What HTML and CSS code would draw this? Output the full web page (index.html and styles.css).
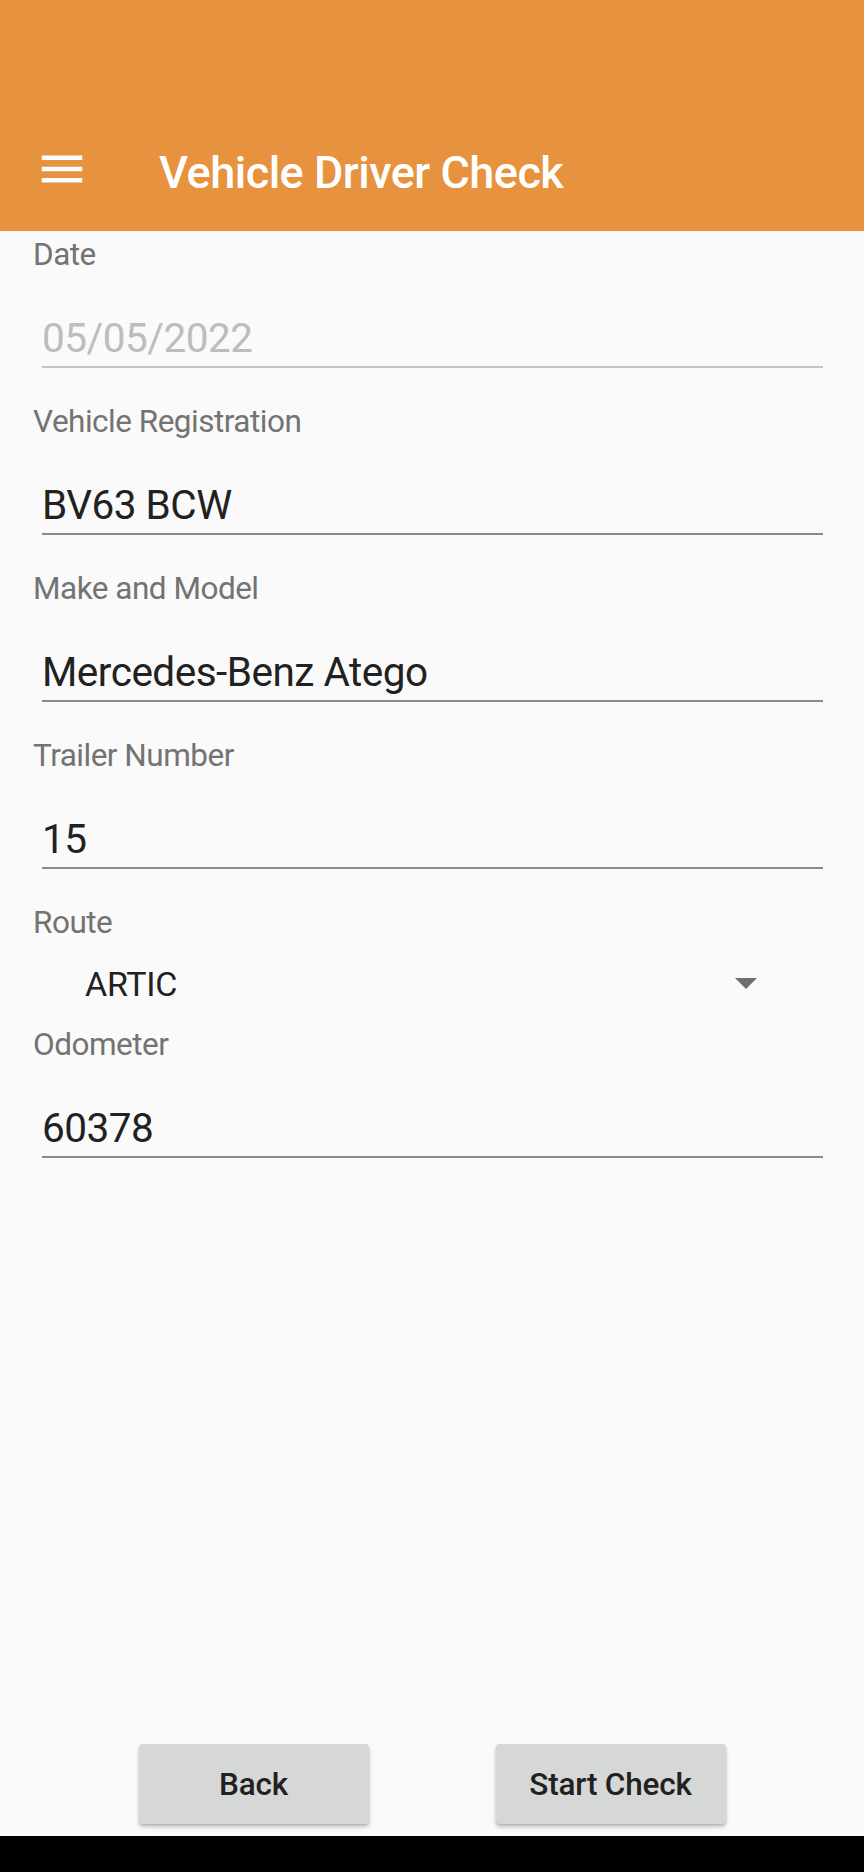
FILE: index.html
```html
<!DOCTYPE html>
<html lang="en">

<head>
    <meta charset="UTF-8">
    <title>Vehicle Driver Check</title>
    <link rel="stylesheet" href="styles.css">
</head>

<body>
    <div class="appbar">
        <div class="toolbar">
            <svg class="menuIcon" viewBox="0 0 24 24">
                <path d="M3 18h18v-2H3v2zm0-5h18v-2H3v2zm0-7v2h18V6H3z" fill="#fff"></path>
            </svg>
            <div class="title">Vehicle Driver Check</div>
        </div>
    </div>

    <div class="content">
        <div class="field first">
            <div class="label">Date</div>
            <div class="value disabled">05/05/2022</div>
        </div>
        <div class="field">
            <div class="label">Vehicle Registration</div>
            <div class="value">BV63 BCW</div>
        </div>
        <div class="field">
            <div class="label">Make and Model</div>
            <div class="value">Mercedes-Benz Atego</div>
        </div>
        <div class="field">
            <div class="label">Trailer Number</div>
            <div class="value">15</div>
        </div>
        <div class="field">
            <div class="label">Route</div>
            <div class="spinner">
                <span class="spinnerText">ARTIC</span>
                <span class="arrow"></span>
            </div>
        </div>
        <div class="field after-spinner">
            <div class="label">Odometer</div>
            <div class="value">60378</div>
        </div>
    </div>

    <div class="btnRow">
        <div class="btn">Back</div>
        <div class="btn">Start Check</div>
    </div>

    <div class="navbar"></div>
</body>

</html>
```

FILE: styles.css
```css
* {
    margin: 0px;
    padding: 0px;
    box-sizing: border-box;
}

html,
body {
    width: 100%;
    height: 100%;
}

body {
    display: flex;
    flex-direction: column;
    background-color: #fafafa;
    font-family: Roboto, "Liberation Sans", sans-serif;
    overflow: hidden;
}

.appbar {
    height: 231px;
    background-color: #e7923e;
    display: flex;
    flex-direction: column;
    justify-content: flex-end;
}

.toolbar {
    height: 126px;
    display: flex;
    align-items: center;
}

.menuIcon {
    width: 54px;
    height: 54px;
    margin-left: 35px;
    margin-top: 2px;
}

.title {
    margin-left: 70px;
    padding-top: 9px;
    font-size: 45px;
    line-height: 53px;
    font-weight: 500;
    letter-spacing: -0.5px;
    color: #fff;
}

.content {
    flex: 1;
}

.field {
    margin-top: 35px;
}

.field.first {
    margin-top: 5px;
}

.field.after-spinner {
    margin-top: 0px;
}

.label {
    padding-left: 33px;
    font-size: 31.5px;
    line-height: 37px;
    letter-spacing: -0.5px;
    color: #737373;
}

.value {
    margin: 41px 41px 0 42px;
    height: 54px;
    padding-bottom: 4px;
    border-bottom: 2px solid #8a8a8a;
    font-size: 40.5px;
    line-height: 48px;
    letter-spacing: -0.5px;
    color: #212121;
}

.value.disabled {
    color: #bdbdbd;
    border-bottom-color: #c4c4c4;
}

.spinner {
    height: 85px;
    display: flex;
    align-items: center;
    padding-left: 85px;
    padding-right: 107px;
}

.spinnerText {
    flex: 1;
    font-size: 34px;
    line-height: 40px;
    letter-spacing: -0.3px;
    color: #212121;
}

.arrow {
    width: 0px;
    height: 0px;
    border-left: 11px solid transparent;
    border-right: 11px solid transparent;
    border-top: 11px solid #6f6f6f;
}

.btnRow {
    display: flex;
    justify-content: center;
    gap: 127px;
    padding-bottom: 12px;
}

.btn {
    width: 230px;
    height: 80px;
    background-color: #d6d7d7;
    border-radius: 4px;
    box-shadow: 0 3px 4px rgba(0, 0, 0, 0.22), 0 1px 2px rgba(0, 0, 0, 0.12);
    color: #212121;
    font-size: 31.5px;
    font-weight: 500;
    letter-spacing: -0.2px;
    display: flex;
    align-items: center;
    justify-content: center;
}

.navbar {
    height: 36px;
    background-color: #000;
}
```
